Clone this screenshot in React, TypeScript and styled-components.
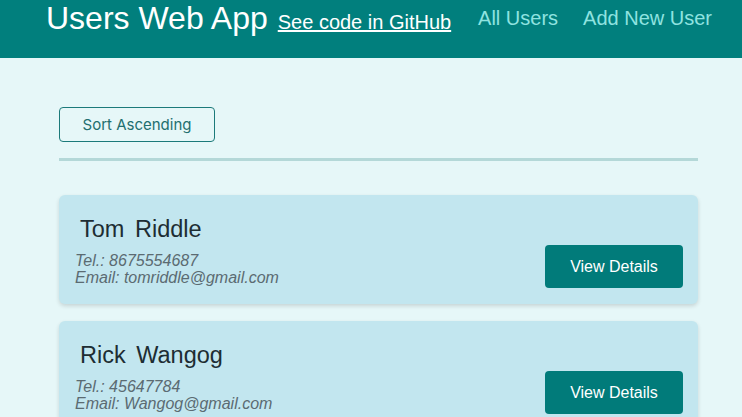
import React from "react";
import styled, { createGlobalStyle } from "styled-components";

const GlobalStyle = createGlobalStyle`
  html, body { margin: 0; padding: 0; }
  body {
    background: #e6f7f8;
    font-family: "Liberation Sans", Arial, sans-serif;
  }
`;

const Header = styled.header`
  height: 58px;
  background: #017f7d;
  display: flex;
  align-items: flex-start;
  justify-content: space-between;
  padding: 0 30px 0 46px;
  box-sizing: border-box;
`;

const Brand = styled.div`
  display: flex;
  align-items: baseline;
  gap: 10px;
`;

const Title = styled.h1`
  margin: 0;
  font-size: 32px;
  font-weight: 400;
  color: #ffffff;
  line-height: 37px;
`;

const GitLink = styled.a`
  font-size: 20px;
  color: #ffffff;
  text-decoration: underline;
`;

const Nav = styled.nav`
  display: flex;
  gap: 25px;
  height: 37px;
  align-items: baseline;
`;

const NavLink = styled.a`
  font-size: 20px;
  line-height: 37px;
  color: #8fe3e0;
  text-decoration: none;
`;

const Main = styled.main`
  width: 639px;
  margin-left: 59px;
  padding-top: 49px;
`;

const SortButton = styled.button`
  width: 156px;
  height: 35px;
  background: transparent;
  border: 1px solid #1c7a7a;
  border-radius: 4px;
  color: #236f6f;
  font-family: Inter, "Open Sans", sans-serif;
  font-size: 15px;
  cursor: pointer;
`;

const Divider = styled.hr`
  margin: 16px 0 34px;
  border: none;
  height: 3px;
  background: #b4d8d8;
`;

const List = styled.div`
  display: flex;
  flex-direction: column;
  gap: 17px;
`;

const Card = styled.div`
  background: #c2e6ef;
  border-radius: 6px;
  box-shadow: 0 2px 4px rgba(0, 0, 0, 0.14);
  padding: 21px 15px 16px 16px;
  display: flex;
  align-items: flex-end;
  justify-content: space-between;
`;

const Info = styled.div`
  display: flex;
  flex-direction: column;
  padding-bottom: 2px;
`;

const Name = styled.h2`
  margin: 0 0 9px;
  padding-left: 5px;
  font-size: 23.5px;
  word-spacing: 4px;
  font-weight: 400;
  color: #1d2d33;
`;

const Detail = styled.span`
  font-size: 16px;
  font-style: italic;
  line-height: 17px;
  color: #5b6b72;
`;

const ViewButton = styled.button`
  width: 138px;
  height: 43px;
  border: none;
  border-radius: 4px;
  background: #017b7a;
  color: #ffffff;
  font-family: "Liberation Sans", Arial, sans-serif;
  font-size: 16px;
  cursor: pointer;
`;

const users = [
  { first: "Tom", last: "Riddle", tel: "8675554687", email: "tomriddle@gmail.com" },
  { first: "Rick", last: "Wangog", tel: "45647784", email: "Wangog@gmail.com" },
];

export default function App() {
  return (
    <>
      <GlobalStyle />
      <Header>
        <Brand>
          <Title>Users Web App</Title>
          <GitLink href="#">See code in GitHub</GitLink>
        </Brand>
        <Nav>
          <NavLink href="#">All Users</NavLink>
          <NavLink href="#">Add New User</NavLink>
        </Nav>
      </Header>
      <Main>
        <SortButton>Sort Ascending</SortButton>
        <Divider />
        <List>
          {users.map((u) => (
            <Card key={u.email}>
              <Info>
                <Name>
                  {u.first} {u.last}
                </Name>
                <Detail>Tel.: {u.tel}</Detail>
                <Detail>Email: {u.email}</Detail>
              </Info>
              <ViewButton>View Details</ViewButton>
            </Card>
          ))}
        </List>
      </Main>
    </>
  );
}
